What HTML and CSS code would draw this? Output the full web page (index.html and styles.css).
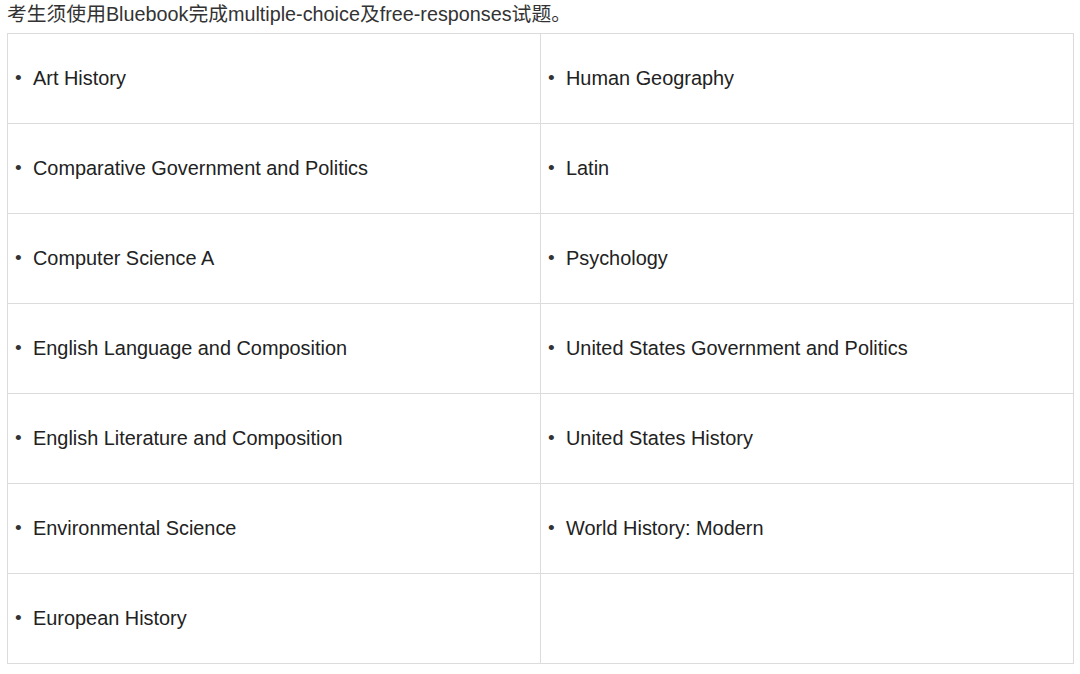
FILE: index.html
```html
<!DOCTYPE html>
<html lang="zh">
<head>
<meta charset="utf-8">
<link rel="stylesheet" href="styles.css">
</head>
<body>
<p class="intro">考生须使用Bluebook完成multiple-choice及free-responses试题。</p>
<table class="subjects">
  <tr><td><span class="dot">•</span>Art History</td><td><span class="dot">•</span>Human Geography</td></tr>
  <tr><td><span class="dot">•</span>Comparative Government and Politics</td><td><span class="dot">•</span>Latin</td></tr>
  <tr><td><span class="dot">•</span>Computer Science A</td><td><span class="dot">•</span>Psychology</td></tr>
  <tr><td><span class="dot">•</span>English Language and Composition</td><td><span class="dot">•</span>United States Government and Politics</td></tr>
  <tr><td><span class="dot">•</span>English Literature and Composition</td><td><span class="dot">•</span>United States History</td></tr>
  <tr><td><span class="dot">•</span>Environmental Science</td><td><span class="dot">•</span>World History: Modern</td></tr>
  <tr><td><span class="dot">•</span>European History</td><td></td></tr>
</table>
</body>
</html>
```
FILE: styles.css
```css
html, body {
  margin: 0;
  padding: 0;
  background: #ffffff;
}
body {
  padding: 0 6px 0 7px;
  font-family: "Liberation Sans", Arial, "Noto Sans CJK SC", sans-serif;
  color: #333333;
}
.intro {
  margin: 0;
  height: 33px;
  line-height: 33px;
  font-size: 19.8px;
  position: relative;
  top: -2px;
}
.subjects {
  width: 1067px;
  border-collapse: collapse;
  table-layout: fixed;
}
.subjects td {
  width: 50%;
  height: 90px;
  padding: 0 0 0 7px;
  border: 1px solid #dcdcdc;
  font-size: 19.9px;
  color: #222222;
  vertical-align: middle;
  box-sizing: border-box;
}
.dot {
  display: inline-block;
  width: 18px;
  font-size: 19px;
  color: #333333;
  position: relative;
  top: -1px;
}
```
